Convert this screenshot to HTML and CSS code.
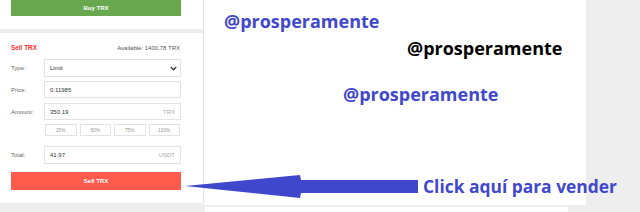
FILE: index.html
```html
<!DOCTYPE html>
<html>
<head>
<meta charset="utf-8">
<link rel="stylesheet" href="styles.css">
</head>
<body>
<div class="page">
  <div class="left">
    <div class="buy-card">
      <div class="btn buy">Buy TRX</div>
    </div>
    <div class="sell-card">
      <div class="head">
        <span class="title">Sell TRX</span>
        <span class="avail">Available: 1400.78 TRX</span>
      </div>
      <div class="form">
        <div class="label r-type">Type:</div>
        <div class="field select r-type"><span>Limit</span>
          <svg class="chev" width="7" height="5" viewBox="0 0 7 5"><path d="M0.8 1 L3.5 3.8 L6.2 1" fill="none" stroke="#333" stroke-width="1.3"/></svg>
        </div>
        <div class="label r-price">Price:</div>
        <div class="field r-price"><span>0.11985</span></div>
        <div class="label r-amount">Amount:</div>
        <div class="field r-amount"><span>350.19</span><span class="unit">TRX</span></div>
        <div class="pcts r-pct">
          <div class="pct">25%</div>
          <div class="pct">50%</div>
          <div class="pct">75%</div>
          <div class="pct">100%</div>
        </div>
        <div class="label r-total">Total:</div>
        <div class="field r-total"><span>41.97</span><span class="unit">USDT</span></div>
      </div>
      <div class="btn sell">Sell TRX</div>
    </div>
  </div>
  <div class="right"></div>
  <div class="note n1">@prosperamente</div>
  <div class="note n2">@prosperamente</div>
  <div class="note n3">@prosperamente</div>
  <svg class="arrow" width="235" height="24" viewBox="0 0 235 24">
    <polygon points="0,11 115,0 116,5 233,5 233,18 116,18 115,23" fill="#3f48cc"/>
  </svg>
  <div class="note click">Click aquí para vender</div>
  <div class="bottom-strip"></div>
</div>
</body>
</html>
```
FILE: styles.css
```css
html, body {
  margin: 0;
  padding: 0;
}
body {
  width: 640px;
  height: 212px;
  overflow: hidden;
  background: #eeeeee;
  font-family: "Liberation Sans", Arial, sans-serif;
}
.page {
  position: relative;
  display: flex;
  width: 640px;
  height: 212px;
}
.left {
  width: 203px;
  display: flex;
  flex-direction: column;
  gap: 4px;
  border-right: 1px solid #e2e2e2;
  background: #eeeeee;
  height: 203px;
}
.buy-card {
  background: #fff;
  height: 29px;
  padding-left: 11px;
  box-sizing: border-box;
}
.btn {
  width: 170px;
  height: 17px;
  display: flex;
  align-items: center;
  justify-content: center;
  color: #fff;
  font-weight: bold;
  font-size: 6px;
}
.buy {
  height: 16px;
  background: #6aa84f;
}
.sell-card {
  background: #fff;
  flex: 1;
  padding: 10px 0 0 11px;
}
.head {
  width: 170px;
  height: 9px;
  display: flex;
  justify-content: space-between;
  align-items: center;
  margin-bottom: 7px;
}
.title {
  color: #ff2d2d;
  font-weight: bold;
  font-size: 6.4px;
}
.avail {
  color: #555;
  font-size: 6px;
  padding-right: 1px;
}
.form {
  display: grid;
  grid-template-columns: 33px 137px;
  grid-template-rows: 18px 4px 17px 5px 17px 4px 12px 10px 18px;
  width: 170px;
}
.r-type { grid-row: 1; }
.r-price { grid-row: 3; }
.r-amount { grid-row: 5; }
.r-pct { grid-row: 7; grid-column: 2; }
.r-total { grid-row: 9; }
.label {
  color: #666;
  font-size: 6px;
  display: flex;
  align-items: center;
  grid-column: 1;
}
.field {
  grid-column: 2;
  border: 1px solid #e3e3e3;
  box-sizing: border-box;
  display: flex;
  align-items: center;
  justify-content: space-between;
  padding: 0 5px 0 5px;
  font-size: 6px;
  color: #333;
}
.select {
  padding-right: 3px;
}
.unit {
  color: #aaa;
}
.pcts {
  display: flex;
  gap: 3px;
  padding-left: 1px;
  width: 136px;
  box-sizing: border-box;
}
.pct {
  flex: 1;
  border: 1px solid #e3e3e3;
  display: flex;
  align-items: center;
  justify-content: center;
  font-size: 4.8px;
  color: #999;
}
.sell {
  margin-top: 8px;
  height: 18px;
  background: #ff5b4d;
}
.right {
  width: 382px;
  height: 205px;
  background: #fff;
}
.note {
  position: absolute;
  font-family: "Open Sans", "Noto Sans", sans-serif;
  font-weight: bold;
  font-size: 18px;
  line-height: 20px;
  color: #3f48cc;
  white-space: nowrap;
}
.n1 { left: 224px; top: 11px; }
.n2 { left: 407px; top: 38px; color: #000; }
.n3 { left: 343px; top: 84px; }
.click { left: 423px; top: 176px; font-size: 17.4px; }
.arrow {
  position: absolute;
  left: 185px;
  top: 175px;
}
.bottom-strip {
  position: absolute;
  left: 205px;
  top: 207px;
  width: 363px;
  height: 5px;
  background: #fff;
}
```
